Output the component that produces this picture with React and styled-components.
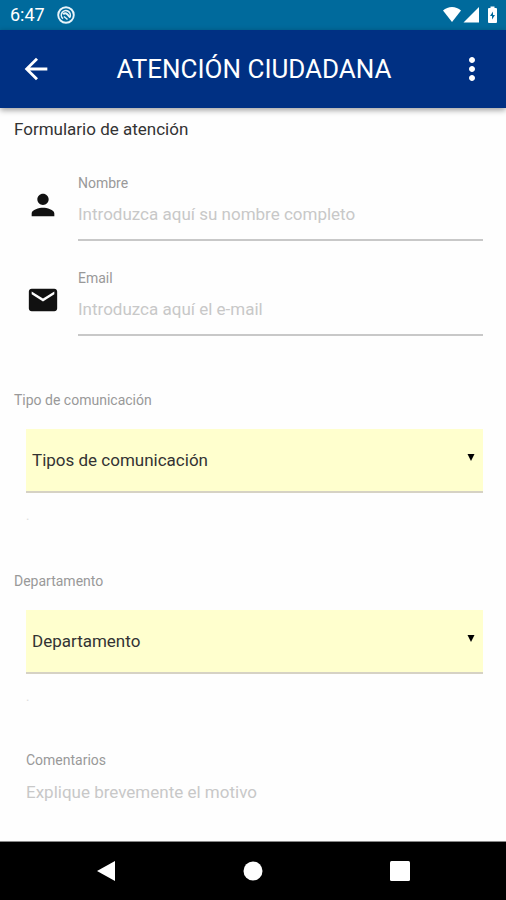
import React from 'react';
import styled, { createGlobalStyle } from 'styled-components';
import { MdPerson, MdMail, MdArrowBack, MdMoreVert } from 'react-icons/md';

const GlobalStyle = createGlobalStyle`
  * {
    box-sizing: border-box;
  }

  body {
    margin: 0;
    font-family: Roboto, sans-serif;
    background: #fefefe;
    color: #333;
  }

  button,
  input,
  select,
  textarea {
    font-family: inherit;
  }
`;

const Screen = styled.div`
  display: flex;
  flex-direction: column;
  min-height: 100vh;
`;

const StatusBar = styled.div`
  display: flex;
  align-items: center;
  justify-content: space-between;
  height: 30px;
  padding: 0 8px 0 10px;
  background: #006a9c;
  color: #fff;
`;

const StatusGroup = styled.div`
  display: flex;
  align-items: center;
  gap: 12px;
`;

const Clock = styled.span`
  font-size: 18px;
  line-height: 30px;
`;

const AppBar = styled.header`
  display: flex;
  align-items: center;
  justify-content: space-between;
  height: 78px;
  padding: 0 16px 0 18px;
  background: #003083;
  color: #fff;
  box-shadow: 0 2px 6px rgba(0, 0, 0, 0.4);
`;

const Title = styled.h1`
  margin: 0;
  font-size: 26px;
  font-weight: 400;
  line-height: 32px;
`;

const IconButton = styled.button`
  display: flex;
  align-items: center;
  justify-content: center;
  width: 36px;
  height: 48px;
  padding: 0;
  border: 0;
  background: none;
  color: inherit;
  cursor: pointer;
`;

const Form = styled.form`
  display: flex;
  flex: 1;
  flex-direction: column;
  padding: 10px 23px 0 14px;
`;

const Heading = styled.h2`
  margin: 0 0 33px;
  font-size: 17px;
  font-weight: 400;
  line-height: 22px;
`;

const IconRow = styled.div`
  display: flex;
  align-items: flex-start;
  gap: 18px;
  margin-bottom: 27px;
  padding-left: 12px;
  color: #111;

  svg {
    margin-top: 15px;
  }
`;

const Field = styled.div`
  display: flex;
  flex: 1;
  flex-direction: column;
`;

const Label = styled.label`
  font-size: 14px;
  line-height: 20px;
  color: #999;
`;

const TextInput = styled.input`
  width: 100%;
  height: 48px;
  padding: 0 0 4px;
  border: 0;
  border-bottom: 2px solid #c8c8c8;
  outline: none;
  background: none;
  font-size: 17px;
  color: #333;

  &::placeholder {
    color: #c8c8c8;
    opacity: 1;
  }
`;

const SelectGroup = styled.div`
  display: flex;
  flex-direction: column;
  margin-top: ${({ $space }) => $space}px;
`;

const SelectBox = styled.div`
  display: grid;
  align-items: center;
  margin: 19px 0 0 12px;
  border-bottom: 2px solid #d6d2c4;
  background: #ffffce;
`;

const Select = styled.select`
  grid-area: 1 / 1;
  width: 100%;
  height: 62px;
  padding: 0 32px 0 6px;
  border: 0;
  outline: none;
  appearance: none;
  background: none;
  font-size: 17px;
  color: #333;
`;

const Caret = styled.svg`
  grid-area: 1 / 1;
  justify-self: end;
  margin: 0 8px 6px 0;
  pointer-events: none;
`;

const Hint = styled.span`
  margin-left: 12px;
  padding-top: 14px;
  font-size: 13px;
  line-height: 18px;
  color: #ddd;
`;

const Comments = styled.div`
  display: flex;
  flex: 1;
  flex-direction: column;
  margin: 44px 0 0 12px;
`;

const TextArea = styled.textarea`
  flex: 1;
  width: 100%;
  min-height: 48px;
  padding: 10px 0 0;
  border: 0;
  outline: none;
  resize: none;
  background: none;
  font-size: 17px;
  line-height: 24px;
  color: #333;

  &::placeholder {
    color: #c8c8c8;
    opacity: 1;
  }
`;

const NavBar = styled.nav`
  display: flex;
  justify-content: space-around;
  align-items: center;
  height: 59px;
  padding: 0 32px;
  border-top: 1px solid #888;
  background: #000;
  color: #fff;
`;

const InputRow = ({ id, label, placeholder, type, icon }) => (
  <IconRow>
    {icon}
    <Field>
      <Label htmlFor={id}>{label}</Label>
      <TextInput id={id} type={type} placeholder={placeholder} />
    </Field>
  </IconRow>
);

const SelectField = ({ id, label, option, space }) => (
  <SelectGroup $space={space}>
    <Label htmlFor={id}>{label}</Label>
    <SelectBox>
      <Select id={id}>
        <option>{option}</option>
      </Select>
      <Caret width="8" height="7" viewBox="0 0 8 7" aria-hidden="true">
        <path d="M0.5 0h7L4 7z" fill="#000" />
      </Caret>
    </SelectBox>
    <Hint>.</Hint>
  </SelectGroup>
);

const App = () => {
  return (
    <Screen>
      <GlobalStyle />
      <StatusBar>
        <StatusGroup>
          <Clock>6:47</Clock>
          <svg width="18" height="18" viewBox="0 0 18 18" fill="none" stroke="#e8f4fa">
            <circle cx="9" cy="9" r="7.8" strokeWidth="1.9" />
            <path d="M6 12.6A4.5 4.5 0 1 1 12.8 11.2" strokeWidth="1.6" />
            <path d="M6.200 8.200c1.500-1.500 3-1 4 0l3 3.400" strokeWidth="2" />
            <path d="M7 10.500l3.500 3" strokeWidth="1.500" />
          </svg>
        </StatusGroup>
        <svg width="55" height="18" viewBox="0 0 55 18" fill="#fff">
          <path d="M0 4.500C5-0.200 13-0.200 18 4.500L9 16z" />
          <path d="M36 1v15.500H20.500z" />
          <path d="M47.500 0.500h4V2H53a1 1 0 0 1 1 1v13a1 1 0 0 1-1 1h-7a1 1 0 0 1-1-1V3a1 1 0 0 1 1-1h1.500z" />
          <path d="M50 5.500l-3 4.500h2v3.500l3-4.500h-2z" fill="#006a9c" />
        </svg>
      </StatusBar>
      <AppBar>
        <IconButton type="button" aria-label="Volver">
          <MdArrowBack size={34} />
        </IconButton>
        <Title>ATENCIÓN CIUDADANA</Title>
        <IconButton type="button" aria-label="Menú">
          <MdMoreVert size={36} />
        </IconButton>
      </AppBar>
      <Form>
        <Heading>Formulario de atención</Heading>
        <InputRow
          id="nombre"
          label="Nombre"
          type="text"
          placeholder="Introduzca aquí su nombre completo"
          icon={<MdPerson size={34} />}
        />
        <InputRow
          id="email"
          label="Email"
          type="email"
          placeholder="Introduzca aquí el e-mail"
          icon={<MdMail size={34} />}
        />
        <SelectField
          id="tipo"
          label="Tipo de comunicación"
          option="Tipos de comunicación"
          space={27}
        />
        <SelectField
          id="departamento"
          label="Departamento"
          option="Departamento"
          space={46}
        />
        <Comments>
          <Label htmlFor="comentarios">Comentarios</Label>
          <TextArea id="comentarios" rows={1} placeholder="Explique brevemente el motivo" />
        </Comments>
      </Form>
      <NavBar>
        <IconButton type="button" aria-label="Atrás">
          <svg width="20" height="22" viewBox="0 0 20 22" fill="currentColor">
            <path d="M19 1v20L1 11z" />
          </svg>
        </IconButton>
        <IconButton type="button" aria-label="Inicio">
          <svg width="20" height="20" viewBox="0 0 20 20" fill="currentColor">
            <circle cx="10" cy="10" r="9.500" />
          </svg>
        </IconButton>
        <IconButton type="button" aria-label="Recientes">
          <svg width="20" height="20" viewBox="0 0 20 20" fill="currentColor">
            <rect width="20" height="20" rx="1.500" />
          </svg>
        </IconButton>
      </NavBar>
    </Screen>
  );
};

export default App;
